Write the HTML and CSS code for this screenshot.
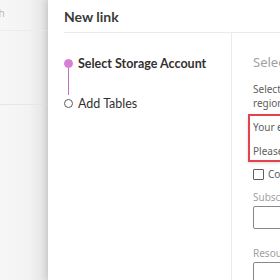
FILE: index.html
```html
<!DOCTYPE html>
<html lang="en">
<head>
    <meta charset="UTF-8">
    <title>New link</title>
    <link rel="stylesheet" href="styles.css">
</head>
<body>
    <div class="app">
        <div class="backdrop">
            <div class="backdrop-search">Search</div>
            <div class="backdrop-list"></div>
        </div>

        <div class="panel">
            <div class="panel-header">New link</div>

            <div class="panel-body">
                <div class="steps">
                    <div class="step active">
                        <div class="step-marker">
                            <div class="step-dot"></div>
                            <div class="step-line"></div>
                        </div>
                        <div class="step-label">Select Storage Account</div>
                    </div>
                    <div class="step">
                        <div class="step-marker">
                            <div class="step-dot"></div>
                        </div>
                        <div class="step-label">Add Tables</div>
                    </div>
                </div>

                <div class="form">
                    <div class="form-title">Select Storage Account</div>
                    <div class="form-desc">
                        Select an existing storage account in the same<br>
                        region as your workspace.
                    </div>

                    <div class="alert">
                        <div>Your existing storage account could not be found.</div>
                        <div>Please select another one.</div>
                    </div>

                    <label class="check">
                        <span class="check-box"></span>
                        Connect to a different subscription
                    </label>

                    <div class="field">
                        <div class="field-label">Subscription</div>
                        <div class="field-input"></div>
                    </div>

                    <div class="field">
                        <div class="field-label">Resource group</div>
                        <div class="field-input"></div>
                    </div>
                </div>
            </div>
        </div>
    </div>
</body>
</html>
```

FILE: styles.css
```css
* {
    margin: 0;
    padding: 0;
    box-sizing: border-box;
}

body {
    font-family: 'Segoe UI', 'Noto Sans', 'Open Sans', sans-serif;
    background: #ffffff;
    color: #323130;
    width: 280px;
    height: 280px;
    overflow: hidden;
}

.app {
    display: flex;
    width: 280px;
    height: 280px;
}

/* dimmed page behind the panel */
.backdrop {
    width: 48px;
    flex-shrink: 0;
    overflow: hidden;
    background: linear-gradient(90deg, #f7f7f7 0%, #f3f3f3 60%, #e2e2e2 100%);
}

.backdrop-search {
    height: 31px;
    padding: 6px 0 0 0;
    margin-left: -27px;
    font-size: 10px;
    color: #b8b8b8;
    border-bottom: 1px solid #ececec;
}

.backdrop-list {
    height: 74px;
    border-bottom: 1px solid #e6e6e6;
}

.panel {
    flex: 1;
    min-width: 0;
    background: #ffffff;
    padding-left: 16px;
    overflow: hidden;
    box-shadow: -2px 0 6px rgba(0, 0, 0, 0.12);
    white-space: nowrap;
}

.panel-header {
    height: 33px;
    padding-top: 8px;
    font-family: Lato, 'Noto Sans', sans-serif;
    font-size: 14px;
    font-weight: 700;
    color: #3b3a39;
    border-bottom: 1px solid #edebe9;
}

.panel-body {
    display: flex;
    height: 247px;
}

.steps {
    width: 168px;
    flex-shrink: 0;
    padding-top: 22px;
    border-right: 1px solid #edebe9;
    font-family: Lato, 'Noto Sans', sans-serif;
}

.step {
    display: flex;
    gap: 5px;
}

.step-marker {
    width: 9px;
    flex-shrink: 0;
    display: flex;
    flex-direction: column;
    align-items: center;
    padding-top: 4px;
}

.step-dot {
    width: 9px;
    height: 9px;
    border-radius: 50%;
    border: 1px solid #605e5c;
    background: #ffffff;
}

.step-line {
    width: 1px;
    height: 27px;
    background: #c56ec5;
}

.step.active .step-dot {
    background: #d57fd5;
    border-color: #d57fd5;
}

.step-label {
    font-size: 12.5px;
    line-height: 17px;
    color: #323130;
}

.step.active .step-label {
    font-weight: 700;
}

.form {
    padding: 20px 0 0 16px;
    min-width: 0;
}

.form-title {
    font-size: 13px;
    color: #a19f9d;
    padding-left: 5px;
    line-height: 18px;
}

.form-desc {
    font-size: 10px;
    line-height: 14px;
    color: #605e5c;
    margin-top: 11px;
    padding-left: 5px;
}

.alert {
    margin-top: 4px;
    height: 48px;
    border: 2px solid #e3434f;
    border-right: none;
    padding: 4px 0 0 3px;
    font-size: 10px;
    line-height: 14px;
    color: #605e5c;
    box-shadow: 0 1px 3px rgba(0, 0, 0, 0.15);
}

.alert div + div {
    margin-top: 10px;
}

.check {
    display: flex;
    align-items: center;
    gap: 4px;
    margin-top: 5px;
    padding-left: 5px;
    font-size: 10px;
    line-height: 14px;
    color: #605e5c;
}

.check-box {
    width: 11px;
    height: 11px;
    flex-shrink: 0;
    border: 1px solid #605e5c;
    border-radius: 1px;
}

.field {
    padding-left: 5px;
    margin-top: 9px;
}

.field + .field {
    margin-top: 17px;
}

.field-label {
    font-size: 10px;
    color: #a19f9d;
    line-height: 14px;
}

.field-input {
    margin-top: 2px;
    height: 23px;
    width: 220px;
    border: 1px solid #8a8886;
    border-radius: 2px;
}
```
